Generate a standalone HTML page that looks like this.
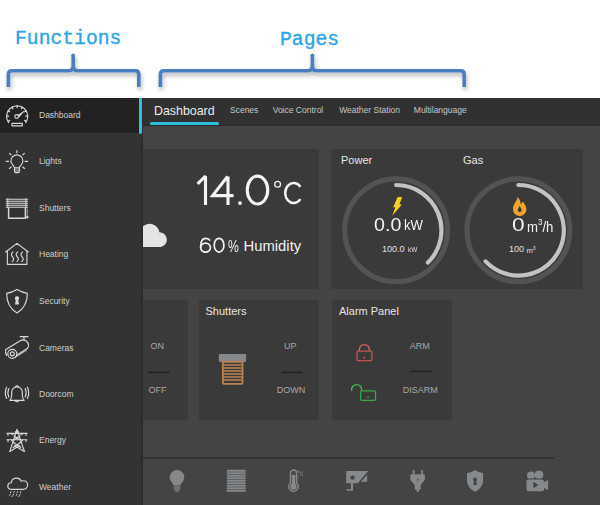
<!DOCTYPE html>
<html><head><meta charset="utf-8">
<style>
*{margin:0;padding:0;box-sizing:border-box}
html,body{width:600px;height:505px;overflow:hidden;background:#fff;font-family:"Liberation Sans",sans-serif}
.a{position:absolute}
.t{position:absolute;white-space:nowrap;line-height:1}
svg{position:absolute;left:0;top:0;overflow:visible}
.card{position:absolute;background:#3a3a3a}
.sl{position:absolute;left:39px;color:#cfcfcf;font-size:8.5px;line-height:1;white-space:nowrap}
.tab{position:absolute;color:#c6c6c6;font-size:8.5px;line-height:1;white-space:nowrap;top:106px}
.ct{position:absolute;color:#e6e6e6;font-size:11px;line-height:1;white-space:nowrap}
.sw{position:absolute;color:#a8a8a8;font-size:9px;line-height:1;white-space:nowrap}
.ann{position:absolute;font-family:"Liberation Mono",monospace;color:#2aa6e6;-webkit-text-stroke:0.35px #2aa6e6;font-size:19.7px;line-height:1;white-space:nowrap}
</style></head><body>

<!-- annotations -->
<div class="ann" style="left:15px;top:29.5px">Functions</div>
<div class="ann" style="left:280px;top:30.5px">Pages</div>
<svg width="600" height="100" viewBox="0 0 600 100">
  <defs>
    <filter id="sh" x="-10%" y="-50%" width="120%" height="250%">
      <feGaussianBlur in="SourceAlpha" stdDeviation="2"/>
      <feOffset dy="3" dx="0.6"/>
      <feComponentTransfer><feFuncA type="linear" slope="0.32"/></feComponentTransfer>
      <feMerge><feMergeNode/><feMergeNode in="SourceGraphic"/></feMerge>
    </filter>
  </defs>
  <g fill="none" stroke="#4a7ec0" stroke-width="3.6" filter="url(#sh)">
    <path d="M8.4 87 V74.4 Q8.4 70.8 12 70.8 H68.4 Q73.2 70.8 73.2 65.5 V55.2 V65.5 Q73.2 70.8 78 70.8 H135.2 Q138.8 70.8 138.8 74.4 V87"/>
    <circle cx="73.2" cy="55.2" r="1.8" fill="#4a7ec0" stroke="none"/>
    <path d="M160.4 87 V74.4 Q160.4 70.8 164 70.8 H307.6 Q312.4 70.8 312.4 65.5 V55.2 V65.5 Q312.4 70.8 317.2 70.8 H460.6 Q464.2 70.8 464.2 74.4 V87"/>
    <circle cx="312.4" cy="55.2" r="1.8" fill="#4a7ec0" stroke="none"/>
  </g>
</svg>

<!-- app background -->
<div class="a" style="left:0;top:98px;width:600px;height:407px;background:#444"></div>
<div class="card" style="left:67px;top:149px;width:252.3px;height:139.5px"></div>
<div class="card" style="left:331.3px;top:149px;width:251.5px;height:139.5px"></div>
<div class="card" style="left:68px;top:300px;width:120px;height:120px"></div>
<div class="card" style="left:199.2px;top:300px;width:120px;height:120px"></div>
<div class="card" style="left:331.5px;top:300px;width:120px;height:120px"></div>
<div class="a" style="left:142px;top:457px;width:412px;height:2px;background:#343434"></div>

<!-- card contents -->
<svg width="600" height="505" viewBox="0 0 600 505">
 <!-- cloud on weather card -->
 <path d="M138 247.1 V223.4 H141.5 L143.4 225.9 A10 10 0 0 1 159.4 232.2 A7.5 7.5 0 0 1 160.6 247.1 Z" fill="#e3e4e5"/>
 <!-- power gauge -->
 <g fill="none">
  <circle cx="396.1" cy="230.3" r="51.4" stroke="#535353" stroke-width="5.2"/>
  <path d="M396.1 185 A45.3 45.3 0 0 1 427.9 262.6" stroke="#c3c3c3" stroke-width="4.2" stroke-linecap="round"/>
  <circle cx="518.4" cy="230.3" r="51.4" stroke="#535353" stroke-width="5.2"/>
  <path d="M518.4 185 A45.3 45.3 0 1 1 485.6 261.4" stroke="#c3c3c3" stroke-width="4.2" stroke-linecap="round"/>
 </g>
 <!-- bolt -->
 <path d="M397.6 197 H402.2 L399.4 204.6 H402 L392.2 215.8 L395.4 207.2 H393.2 Z" fill="#f7cf1d"/>
 <!-- flame -->
 <path d="M517.4 197 C517.8 200.6 513 203.4 513 209.2 A6.7 6.7 0 0 0 526.4 209.2 C526.4 205.2 523.6 203.6 523 201.6 C522 203.2 521.2 204 520.6 204.2 C520.8 201.6 519.6 198.8 517.4 197 Z" fill="#f4a42a"/>
 <path d="M519.6 205.6 C520 207.2 521.6 208.4 521.6 210.2 A1.9 1.9 0 0 1 517.8 210.2 C517.8 208.4 519.4 207.2 519.6 205.6 Z" fill="#3a3a3a"/>
 <!-- shutters icon -->
 <rect x="218.9" y="353.9" width="27.2" height="8" rx="1.2" fill="#86898c"/>
 <rect x="222.9" y="361.8" width="19.6" height="22.1" rx="0.8" fill="none" stroke="#be844f" stroke-width="1.8"/>
 <path d="M223.6 365 H241.8 M223.6 368 H241.8 M223.6 371 H241.8 M223.6 374 H241.8 M223.6 377 H241.8 M223.6 380 H241.8" stroke="#be844f" stroke-width="1.3"/>
 <!-- locks -->
 <g fill="none" stroke-width="1.3">
  <path d="M359.4 351 V349.6 A5 5 0 0 1 369.4 349.6 V351" stroke="#e0605a"/>
  <rect x="357" y="351.2" width="14.9" height="9.5" rx="1" stroke="#c25450"/>
  <path d="M351.6 391 V389.6 A5 5 0 0 1 361.6 389.6 V390.8" stroke="#3fc24a"/>
  <rect x="360.6" y="390.8" width="14.9" height="9.5" rx="1" stroke="#38a743"/>
 </g>
 <rect x="363.7" y="356.8" width="1.3" height="1.6" fill="#e0605a"/>
 <rect x="367.4" y="396.4" width="1.3" height="1.4" fill="#3fc24a"/>
 <!-- switch lines -->
 <g fill="#232323">
  <rect x="148" y="371.6" width="21.4" height="1.6"/>
  <rect x="281.9" y="371.6" width="21.1" height="1.6"/>
  <rect x="410.9" y="370.6" width="20.9" height="1.6"/>
 </g>
</svg>
<svg width="600" height="505"><g fill="none" stroke="#f4f4f4" stroke-width="3.1">
 <path d="M197.6 183.9 L205.5 176.2 V205" stroke-linejoin="bevel"/>
 <path d="M228 205 V176.6 M227.6 176.4 L212.6 195.6 H233.6" stroke-linejoin="miter"/>
 <ellipse cx="257.5" cy="190.05" rx="10.25" ry="13.9"/>
</g><circle cx="240" cy="203.1" r="1.95" fill="#f4f4f4"/></svg>
<svg width="600" height="505"><circle cx="277.6" cy="184.3" r="2.9" fill="none" stroke="#f2f2f2" stroke-width="1.3"/></svg>
<svg width="600" height="505"><path d="M300.4 186.8 A8.5 10 0 1 0 300.4 199.2" fill="none" stroke="#f4f4f4" stroke-width="2.4"/></svg>
<svg width="600" height="505"><g fill="none" stroke="#f0f0f0" stroke-width="1.75">
 <path d="M210.1 240.6 C209.2 239.1 207.6 238.4 205.8 238.4 C202.4 238.4 200.7 241.6 200.7 246.2 V247.8"/>
 <ellipse cx="205.55" cy="247.6" rx="4.85" ry="4.45"/>
 <ellipse cx="219.05" cy="245.2" rx="4.85" ry="6.85"/>
</g></svg>
<div class="t" style="left:228.2px;top:238.6px;font-size:16px;color:#f0f0f0;transform:scaleX(0.76);transform-origin:0 0">%</div>
<div class="t" style="left:243.6px;top:238.6px;font-size:14.8px;color:#f0f0f0">Humidity</div>
<div class="ct" style="left:341px;top:154.7px">Power</div>
<div class="ct" style="left:463px;top:154.7px">Gas</div>
<div class="t" style="left:374.4px;top:215.6px;font-size:18.2px;color:#f4f4f4;transform:scaleX(1.08);transform-origin:0 0">0.0</div>
<div class="t" style="left:403.8px;top:217.8px;font-size:14.6px;color:#f4f4f4;transform:scaleX(0.9);transform-origin:0 0">kW</div>
<div class="t" style="left:382px;top:244.8px;font-size:9px;color:#e0e0e0">100.0</div>
<div class="t" style="left:407.6px;top:246.2px;font-size:7.5px;color:#e0e0e0;transform:scaleX(0.85);transform-origin:0 0">kW</div>
<div class="t" style="left:512.2px;top:215.6px;font-size:18.2px;color:#f4f4f4;transform:scaleX(1.25);transform-origin:0 0">0</div>
<div class="t" style="left:526.8px;top:218px;font-size:14.6px;color:#f4f4f4;transform:scaleX(0.9);transform-origin:0 0">m<sup style="font-size:9px;vertical-align:6.5px">3</sup>/h</div>
<div class="t" style="left:509px;top:244.8px;font-size:9px;color:#e0e0e0">100</div>
<div class="t" style="left:526.5px;top:246.2px;font-size:7.5px;color:#e0e0e0">m<sup style="font-size:5px;vertical-align:3px">3</sup></div>
<div class="ct" style="left:205.5px;top:305.8px">Shutters</div>
<div class="ct" style="left:339px;top:305.8px">Alarm Panel</div>
<div class="sw" style="left:150.4px;top:341.5px">ON</div>
<div class="sw" style="left:148.5px;top:386px">OFF</div>
<div class="sw" style="left:284px;top:341.5px">UP</div>
<div class="sw" style="left:276.8px;top:386px">DOWN</div>
<div class="sw" style="left:409.7px;top:341.5px">ARM</div>
<div class="sw" style="left:402.8px;top:386px">DISARM</div>

<!-- bottom nav icons -->
<svg width="600" height="505" viewBox="0 0 600 505">
 <g fill="#85898c">
  <!-- bulb -->
  <path d="M177 470 A7.3 7.3 0 0 1 184.3 477.3 C184.3 481 181.4 482.6 180.4 485.6 H173.6 C172.6 482.6 169.7 481 169.7 477.3 A7.3 7.3 0 0 1 177 470 Z"/>
  <rect x="173.6" y="486.4" width="6.8" height="1.3"/>
  <rect x="173.8" y="488.4" width="6.4" height="1.3"/>
  <rect x="175" y="490.4" width="4" height="1.4" rx="0.6"/>
  <!-- shutter stack -->
  <g>
   <rect x="226.7" y="469.8" width="19.1" height="2" rx="0.8"/>
   <rect x="226.7" y="472.3" width="19.1" height="2" rx="0.8"/>
   <rect x="226.7" y="474.8" width="19.1" height="2" rx="0.8"/>
   <rect x="226.7" y="477.3" width="19.1" height="2" rx="0.8"/>
   <rect x="226.7" y="479.8" width="19.1" height="2" rx="0.8"/>
   <rect x="226.7" y="482.3" width="19.1" height="2" rx="0.8"/>
   <rect x="226.7" y="484.8" width="19.1" height="2" rx="0.8"/>
   <rect x="226.7" y="487.3" width="19.1" height="2" rx="0.8"/>
   <rect x="226.7" y="489.8" width="19.1" height="2" rx="0.8"/>
  </g>
  <!-- plug -->
  <rect x="412.7" y="469.9" width="1.8" height="5" rx="0.6"/>
  <rect x="421.1" y="469.9" width="1.8" height="5" rx="0.6"/>
  <path d="M411.6 474.3 H423.6 Q424.9 474.3 424.9 475.6 V478.8 C424.9 481.4 421 483.4 420.7 485.6 V489.5 H419 V491.8 H416.6 V489.5 H414.8 V485.6 C414.5 483.4 410.3 481.4 410.3 478.8 V475.6 Q410.3 474.3 411.6 474.3 Z"/>
  <!-- shield -->
  <path d="M475.1 470 C472.6 471.7 469.8 472.8 467 473.1 V480 C467 485.2 470.4 489.4 475.1 491.8 C479.8 489.4 483.1 485.2 483.1 480 V473.1 C480.3 472.8 477.6 471.7 475.1 470 Z"/>
  <!-- cctv -->
  <path d="M346.2 471 H368.1 L357.7 483.3 H346.2 Z"/>
  <path d="M367.1 474.9 V481.7 H360.8 Z"/>
  <rect x="350.9" y="483" width="2.1" height="7.7"/>
  <rect x="346.5" y="489.1" width="6.5" height="1.6"/>
  <!-- video cam -->
  <circle cx="530.9" cy="475.5" r="3.9"/>
  <circle cx="538.9" cy="474.9" r="4.5"/>
  <rect x="525.7" y="478.6" width="19.1" height="13.5" rx="2.6" fill="#444"/>
  <rect x="526.5" y="479.4" width="17.5" height="11.9" rx="2.1"/>
  <path d="M543.5 482.4 L548.1 480 V490 L543.5 487.8 Z"/>
 </g>
 <!-- details -->
 <circle cx="352.6" cy="477.6" r="2.2" fill="#444"/>
 <path d="M418.6 476.9 L416.4 480.2 H418 L416.2 483 L419 479.4 H417.5 Z" fill="#444"/>
 <circle cx="475.1" cy="479.4" r="1.9" fill="#444"/>
 <path d="M474.2 480.2 H476 L476.9 485 H473.3 Z" fill="#444"/>
 <path d="M533.3 481.7 L538.5 485 L533.3 488.3 Z" fill="#444"/>
 <!-- thermometer -->
 <g fill="none" stroke="#85898c" stroke-width="1.4">
  <path d="M290.5 482.8 V473 A3 3 0 0 1 296.5 473 V482.8 A4.8 4.8 0 1 1 290.5 482.8 Z"/>
  <path d="M297.4 476.2 h1.2 M297.4 478.2 h1.2 M297.4 480.2 h1.2" stroke-width="0.7"/>
  <circle cx="298.4" cy="471.4" r="0.8" stroke-width="0.8"/>
  <path d="M302.8 475 A1.7 1.7 0 1 1 302.8 472.2" stroke-width="1"/>
 </g>
 <circle cx="293.5" cy="486.6" r="3.2" fill="#85898c"/>
 <rect x="291.9" y="474.9" width="3.3" height="11" fill="#85898c"/>
</svg>

<!-- header -->
<div class="a" style="left:142px;top:98px;width:458px;height:28.4px;background:#313131"></div>
<div class="a" style="left:142px;top:124.8px;width:458px;height:1.6px;background:#2b2b2b"></div>
<div class="t" style="left:154px;top:104.5px;font-size:12.4px;color:#ececec">Dashboard</div>
<div class="a" style="left:150px;top:122.2px;width:69px;height:3.2px;border-radius:1.6px;background:#2ebfdc"></div>
<div class="tab" style="left:230px">Scenes</div>
<div class="tab" style="left:272.7px">Voice Control</div>
<div class="tab" style="left:339.2px">Weather Station</div>
<div class="tab" style="left:413.8px">Multilanguage</div>

<!-- sidebar -->
<div class="a" style="left:0;top:98px;width:142px;height:407px;background:#333"></div>
<div class="a" style="left:141px;top:98px;width:1.7px;height:407px;background:#2c2c2c"></div>
<div class="a" style="left:0;top:98px;width:139px;height:34.5px;background:#222"></div>
<div class="a" style="left:139px;top:98px;width:3px;height:36px;background:#33bfdd;border-radius:0 0 1.5px 1.5px"></div>

<svg width="142" height="505" viewBox="0 0 142 505">
 <g fill="none" stroke="#d8d8d8" stroke-width="1.15" stroke-linecap="round" stroke-linejoin="round">
  <!-- gauge -->
  <path d="M8.6 122.6 A10.6 10.6 0 1 1 25.7 122.6"/>
  <path d="M8.14 121.30 L9.70 120.40 M6.75 116.10 L8.55 116.10 M8.14 110.90 L9.70 111.80 M11.95 107.09 L12.85 108.65 M17.15 105.70 L17.15 107.50 M22.35 107.09 L21.45 108.65 M26.16 110.90 L24.60 111.80 M27.55 116.10 L25.75 116.10 M26.16 121.30 L24.60 120.40" stroke-width="1.3"/>
  <circle cx="16.7" cy="116.5" r="1.9"/>
  <path d="M18.1 115.3 L24.2 111.1 L18.7 117.3" stroke-width="0.8" fill="#d8d8d8"/>
  <rect x="11.9" y="123.3" width="10.5" height="2.5" rx="0.4"/>
  <!-- lights -->
  <path d="M14.5 167.8 C14.4 165.6 10.9 164.6 10.9 160.9 A6 6 0 1 1 22.9 160.9 C22.9 164.6 19.4 165.6 19.4 167.8 Z"/>
  <path d="M14.5 168 V171.3 Q14.5 172.6 15.8 172.6 H18.1 Q19.4 172.6 19.4 171.3 V168" fill="#7a7a7a"/>
  <path d="M16.9 150.6 v2.2 M6 161.3 h2.6 M25 161.3 h2.6 M9.5 153.3 l1.6 1.6 M24.4 153.3 l-1.6 1.6 M9.4 168.5 l1.8 -1.5 M24.5 168.5 l-1.8 -1.5"/>
  <!-- shutters -->
  <path d="M8.6 208.2 V218.2 H25.4 V208.2" stroke-width="1.5"/>
  <path d="M6.2 199.3 H27.6 M6.2 201.3 H27.6 M6.2 203.3 H27.6 M6.2 205.3 H27.6 M6.2 207.3 H27.6" stroke-width="1.05"/>
  <path d="M7.8 198.8 V207.6 M25.9 198.8 V207.6" stroke-width="1"/>
  <path d="M27.3 209 V216.5" stroke-width="0.7" stroke-dasharray="0.8 0.8"/>
  <circle cx="27.3" cy="217.3" r="0.7" fill="#d8d8d8"/>
  <!-- heating -->
  <path d="M5.6 252 L17 243.4 L28.3 252 M7.4 250.6 V264.4 H26.9 V250.6"/>
  <path d="M12.8 252 C11 253.6 11 255.3 12.5 256.9 C14 258.5 14 260 12.3 261.5 M17.6 252 C15.8 253.6 15.8 255.3 17.3 256.9 C18.8 258.5 18.8 260 17.1 261.5 M22.4 252 C20.6 253.6 20.6 255.3 22.1 256.9 C23.6 258.5 23.6 260 21.9 261.5"/>
  <!-- security -->
  <path d="M17 289.6 C13.6 291.6 10.2 292.9 6.7 293.4 C6.6 301.7 9.6 308.4 17 312.9 C24.4 308.4 27.4 301.7 27.3 293.4 C23.8 292.9 20.4 291.6 17 289.6 Z"/>
  <!-- cameras -->
  <path d="M20.2 336.6 H28 M24 336.6 V340.3"/>
  <path d="M5.9 349.6 L19.8 341 Q24.6 338.2 27.8 342.6 Q30.2 346.8 26 349.4 L14.8 357.4"/>
  <path d="M5.9 349.6 Q4.9 352.4 6.6 355.4"/>
  <circle cx="12.3" cy="353.8" r="4.5"/>
  <circle cx="12.3" cy="353.8" r="2"/>
  <path d="M16.6 354.6 L27.4 348.4 M16.4 356.6 L26.4 350.6" stroke-width="0.7"/>
  <!-- doorcom -->
  <path d="M10.2 400.3 H24.2 C22.6 398.8 22.3 397.5 22.3 395.2 V392.2 A5.3 5.3 0 0 0 11.7 392.2 V395.2 C11.7 397.5 11.4 398.8 9.8 400.3"/>
  <path d="M15.4 386.8 Q17 384.9 18.6 386.8"/>
  <path d="M15.2 400.5 A1.9 1.9 0 0 0 18.8 400.5"/>
  <path d="M6.6 387.2 C4.9 391 4.9 394.7 6.6 398.5 M8.8 388.6 C7.6 391.3 7.6 394.2 8.8 396.9 M27.4 387.2 C29.1 391 29.1 394.7 27.4 398.5 M25.2 388.6 C26.4 391.3 26.4 394.2 25.2 396.9"/>
  <!-- energy -->
  <g stroke-width="1.15">
  <path d="M17 429.4 L9.8 451.4 M17 429.4 L24.4 451.4"/>
  <path d="M7 433.4 H27 M7 439.7 H27 M8 433.4 v1.9 M26 433.4 v1.9 M8 439.7 v1.9 M26 439.7 v1.9 M12 433.4 v1.3 M22 433.4 v1.3 M12 439.7 v1.3 M22 439.7 v1.3"/>
  <path d="M14.4 436.2 L19.8 439.7 M19.6 436.2 L14.2 439.7 M15.6 431.6 L19 433.4 M18.4 431.6 L15 433.4 M13.4 442.6 L20.8 447.4 M20.6 442.6 L13.2 447.4 M9.8 451.4 L19.6 445.6 M24.4 451.4 L14.4 445.6"/>
  <path d="M12 433.4 L15 436.2 M22 433.4 L19 436.2 M12 439.7 L14.2 442.6 M22 439.7 L19.8 442.6" stroke-width="0.8"/>
  </g>
  <!-- weather -->
  <path d="M10.3 489.3 H23.3 A4.3 4.3 0 0 0 23.3 480.7 Q22.6 480.7 21.3 481.2 A5.3 5.3 0 0 0 11.2 482.8 A3.3 3.3 0 0 0 10.3 489.3 Z"/>
  <path d="M11 491.6 l-0.5 1.1 M14.3 491.6 l-0.5 1.1 M17.6 491.6 l-0.5 1.1 M20.9 491.6 l-0.5 1.1 M10.2 494.2 l-0.5 1.1 M13.5 494.2 l-0.5 1.1 M16.8 494.2 l-0.5 1.1 M20.1 494.2 l-0.5 1.1 M12.5 496 l-0.3 0.6 M19 496 l-0.3 0.6" stroke-width="0.9"/>
 </g>
 <g fill="#d8d8d8">
  <path d="M17 296.2 A2.1 2.1 0 0 1 18.3 300 L19 304.6 H15 L15.7 300 A2.1 2.1 0 0 1 17 296.2 Z"/>
 </g>
</svg>

<div class="sl" style="top:111.3px">Dashboard</div>
<div class="sl" style="top:157.4px">Lights</div>
<div class="sl" style="top:204.1px">Shutters</div>
<div class="sl" style="top:250.4px">Heating</div>
<div class="sl" style="top:297.2px">Security</div>
<div class="sl" style="top:343.6px">Cameras</div>
<div class="sl" style="top:389.8px">Doorcom</div>
<div class="sl" style="top:436.1px">Energy</div>
<div class="sl" style="top:482.9px">Weather</div>

</body></html>
